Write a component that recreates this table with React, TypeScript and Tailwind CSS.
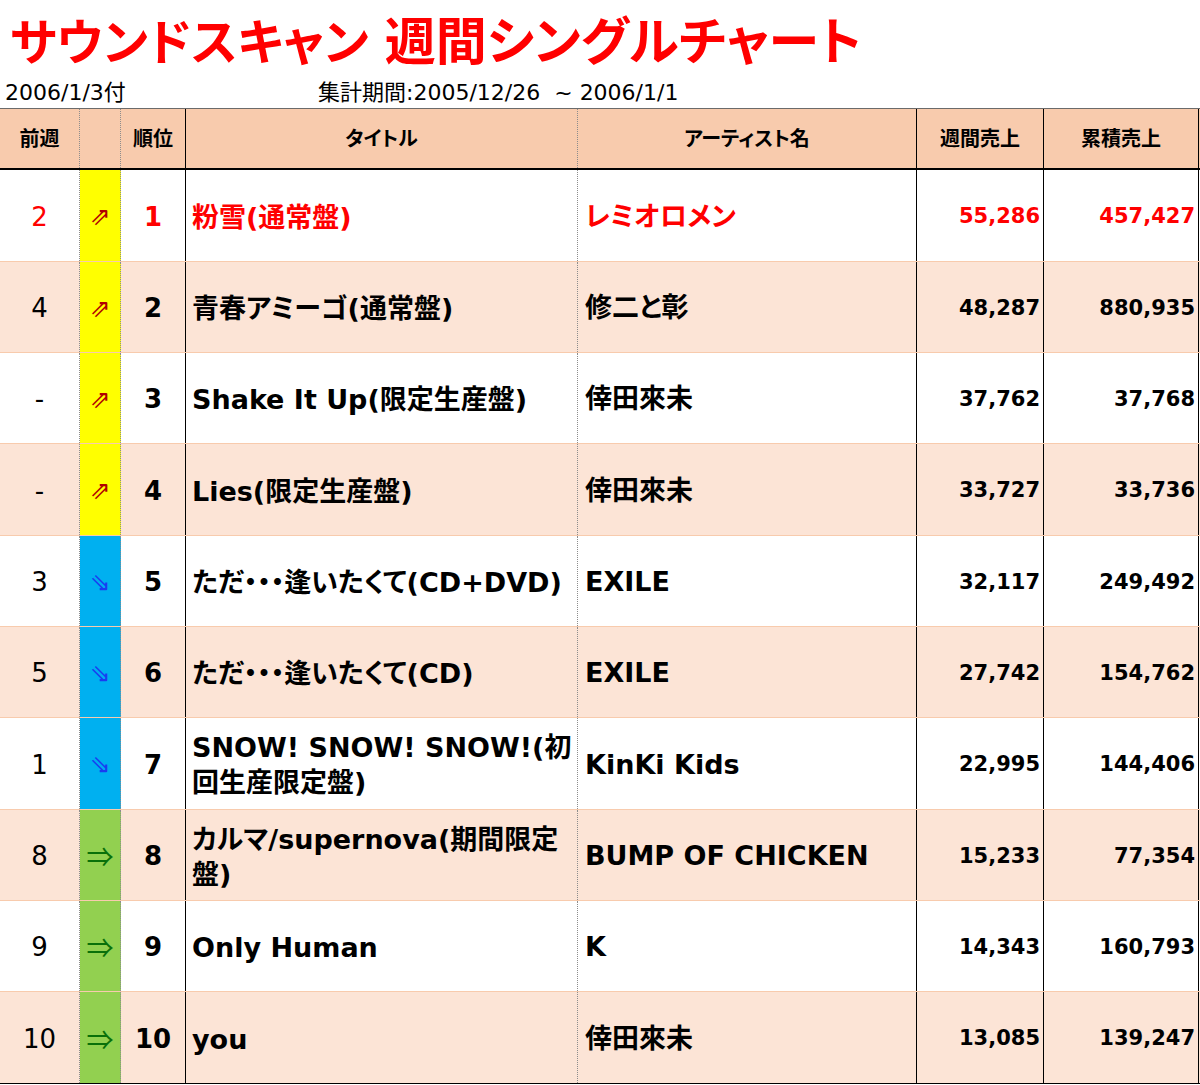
import React from 'react';

type Move = 'up' | 'down' | 'same';

interface Row {
  prev: string;
  move: Move;
  rank: number;
  title: string[];
  artist: string;
  weekly: string;
  total: string;
}

const rows: Row[] = [
  { prev: '2', move: 'up', rank: 1, title: ['粉雪(通常盤)'], artist: 'レミオロメン', weekly: '55,286', total: '457,427' },
  { prev: '4', move: 'up', rank: 2, title: ['青春アミーゴ(通常盤)'], artist: '修二と彰', weekly: '48,287', total: '880,935' },
  { prev: '-', move: 'up', rank: 3, title: ['Shake It Up(限定生産盤)'], artist: '倖田來未', weekly: '37,762', total: '37,768' },
  { prev: '-', move: 'up', rank: 4, title: ['Lies(限定生産盤)'], artist: '倖田來未', weekly: '33,727', total: '33,736' },
  { prev: '3', move: 'down', rank: 5, title: ['ただ・・・逢いたくて(CD+DVD)'], artist: 'EXILE', weekly: '32,117', total: '249,492' },
  { prev: '5', move: 'down', rank: 6, title: ['ただ・・・逢いたくて(CD)'], artist: 'EXILE', weekly: '27,742', total: '154,762' },
  { prev: '1', move: 'down', rank: 7, title: ['SNOW! SNOW! SNOW!(初', '回生産限定盤)'], artist: 'KinKi Kids', weekly: '22,995', total: '144,406' },
  { prev: '8', move: 'same', rank: 8, title: ['カルマ/supernova(期間限定', '盤)'], artist: 'BUMP OF CHICKEN', weekly: '15,233', total: '77,354' },
  { prev: '9', move: 'same', rank: 9, title: ['Only Human'], artist: 'K', weekly: '14,343', total: '160,793' },
  { prev: '10', move: 'same', rank: 10, title: ['you'], artist: '倖田來未', weekly: '13,085', total: '139,247' },
];

const heights = ['h-[92px]', 'h-[91px]', 'h-[91px]', 'h-[92px]', 'h-[91px]', 'h-[91px]', 'h-[92px]', 'h-[91px]', 'h-[91px]', 'h-[91px]'];

const grid = 'grid grid-cols-[80px_41px_65px_392px_339px_127px_155px]';
const dotted = 'border-r border-dotted border-r-[#8c8c8c]';
const solid = 'border-r border-solid border-r-black';

const Arrow = ({ move }: { move: Move }) => {
  if (move === 'up') {
    return <span className="text-[25px] text-[#b00000] [font-family:'DejaVu_Sans',sans-serif]">⇗</span>;
  }
  if (move === 'down') {
    return <span className="text-[25px] text-[#1a3cf0] [font-family:'DejaVu_Sans',sans-serif]">⇘</span>;
  }
  return <span className="text-[27px] text-[#0a700a] [font-family:'Noto_Sans_CJK_JP',sans-serif]">⇒</span>;
};

const moveBg: Record<Move, string> = {
  up: 'bg-[#ffff00]',
  down: 'bg-[#00b0f0]',
  same: 'bg-[#92d050]',
};

export default function App() {
  return (
    <div className="w-[1200px] h-[1085px] overflow-hidden bg-white text-black [font-family:'DejaVu_Sans','Noto_Sans_CJK_JP',sans-serif] [font-feature-settings:'palt']">
      <div className="h-[76px] flex items-baseline pl-[10px] font-bold text-[#ff0000] [font-family:'Noto_Sans_CJK_JP',sans-serif] leading-normal whitespace-nowrap">
        <span className="text-[49px]">サウンドスキャン</span>
        <span className="ml-[16px] text-[51px]">週間シングルチャート</span>
      </div>
      <div className="h-[32px] flex items-center text-[22px] whitespace-nowrap">
        <span className="pl-[5px] w-[318px]">2006/1/3付</span>
        <span>集計期間:2005/12/26&nbsp; ~ 2006/1/1</span>
      </div>

      <div className={`${grid} h-[62px] border-t border-t-[#6b6b6b] border-b-2 border-b-black bg-[#f8cbad] text-[20px] font-bold`}>
        <div className={`${dotted} flex items-center justify-center`}>前週</div>
        <div className={dotted}></div>
        <div className={`${solid} flex items-center justify-center`}>順位</div>
        <div className={`${dotted} flex items-center justify-center`}>タイトル</div>
        <div className={`${solid} flex items-center justify-center`}>アーティスト名</div>
        <div className={`${solid} flex items-center justify-center`}>週間売上</div>
        <div className={`${solid} flex items-center justify-center`}>累積売上</div>
      </div>

      <div className="border-b border-b-black">
        {rows.map((r, i) => {
          const first = i === 0;
          const color = first ? 'text-[#ff0000]' : 'text-black';
          const bg = i % 2 === 1 ? 'bg-[#fce4d6]' : 'bg-white';
          const sep = i < rows.length - 1 ? 'border-b border-b-[#f8cbad]' : '';
          return (
            <div key={r.rank} className={`${grid} ${heights[i]} ${bg} ${sep} ${color}`}>
              <div className={`${dotted} flex items-center justify-center pt-[3px] text-[26px]`}>{r.prev}</div>
              <div className={`${dotted} ${moveBg[r.move]} flex items-center justify-center pt-[3px]`}>
                <Arrow move={r.move} />
              </div>
              <div className={`${solid} flex items-center justify-center pt-[3px] text-[26px] font-bold`}>{r.rank}</div>
              <div className={`${dotted} flex flex-col justify-center pl-[6px] pt-[3px] text-[27px] font-bold leading-[35px] whitespace-nowrap`}>
                {r.title.map((t) => (
                  <span key={t}>{t}</span>
                ))}
              </div>
              <div className={`${solid} flex items-center pl-[7px] pt-[3px] text-[27px] font-bold whitespace-nowrap`}>{r.artist}</div>
              <div className={`${solid} flex items-center justify-end pr-[3px] pt-[3px] text-[21px] font-bold`}>{r.weekly}</div>
              <div className={`${solid} flex items-center justify-end pr-[3px] pt-[3px] text-[21px] font-bold`}>{r.total}</div>
            </div>
          );
        })}
      </div>
    </div>
  );
}
